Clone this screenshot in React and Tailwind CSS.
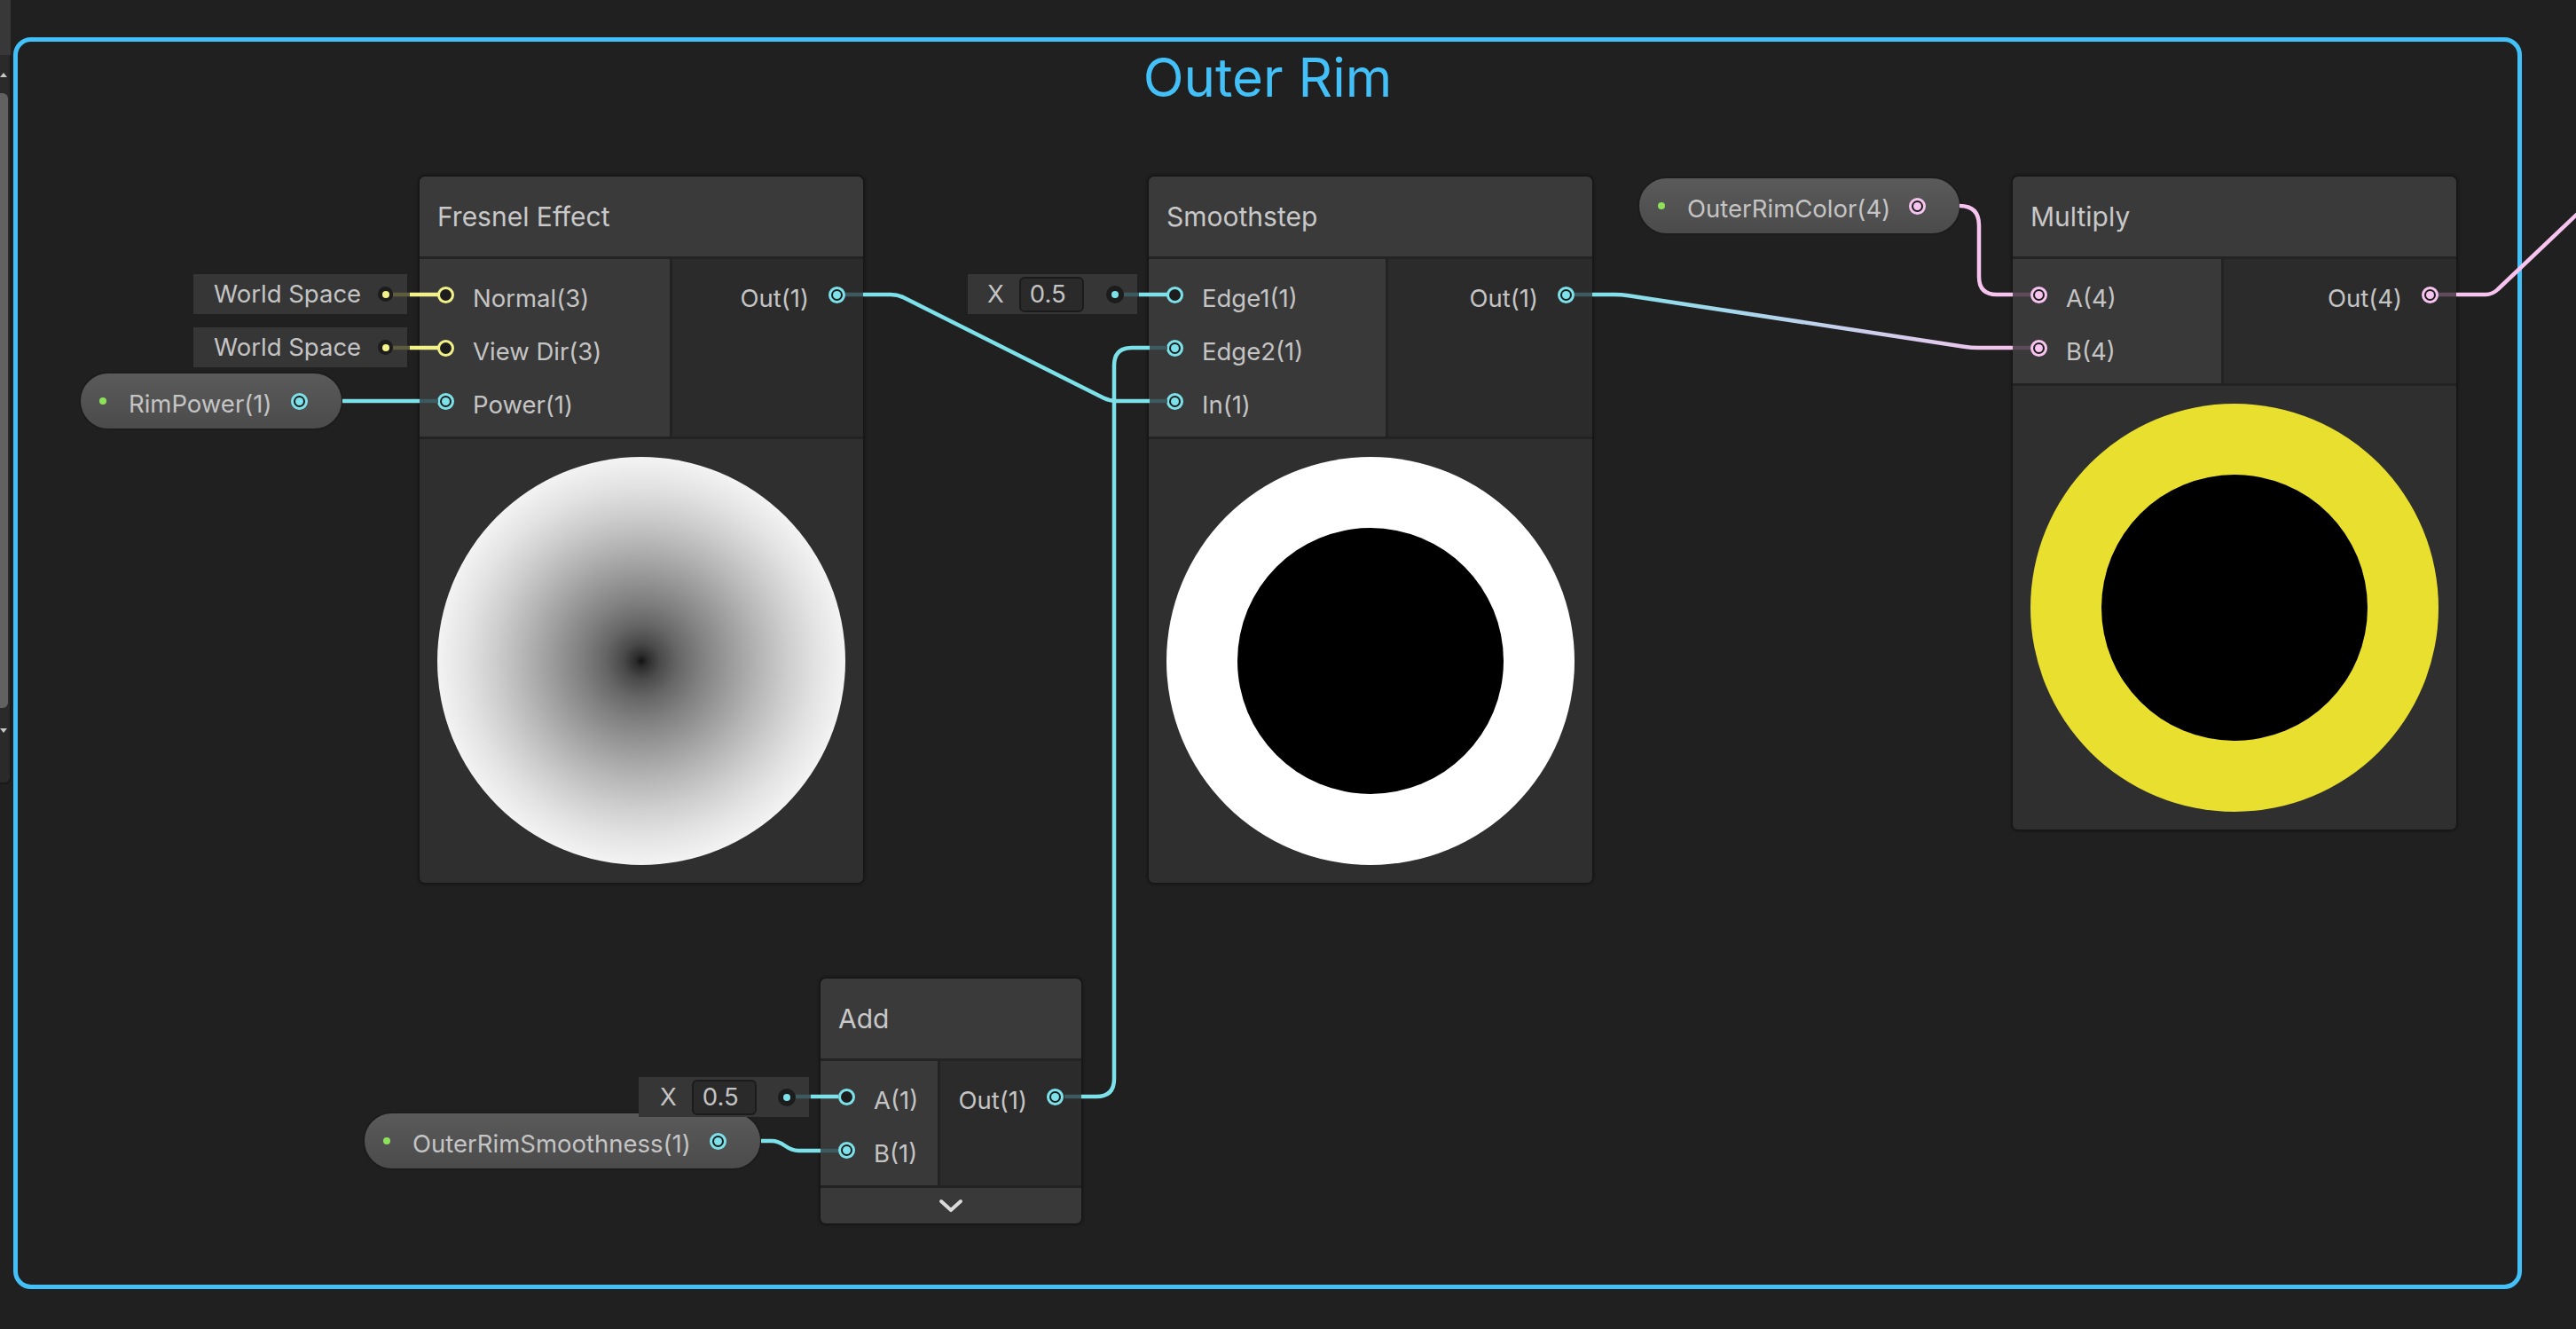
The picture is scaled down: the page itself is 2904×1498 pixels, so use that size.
import React from 'react';

const ringCls = {
  cyan: 'border-[#7de1ea]',
  yellow: 'border-[#f2f18a]',
  pink: 'border-[#f6c4ee]',
};
const dotCls = {
  cyan: 'bg-[#7de1ea]',
  yellow: 'bg-[#f2f18a]',
  pink: 'bg-[#f6c4ee]',
};

const LABEL = 'text-[27.5px] leading-none text-[#c4c4c4] whitespace-nowrap';

function Port({ c, filled }) {
  return (
    <div className={`w-[19px] h-[19px] shrink-0 rounded-full border-[3px] ${ringCls[c]} bg-[#1d1d1d] flex items-center justify-center`}>
      {filled ? <div className={`w-[9px] h-[9px] rounded-full ${dotCls[c]}`} /> : null}
    </div>
  );
}

function InRow({ label, c, filled }) {
  return (
    <div className="h-[60px] flex items-center pl-[20px]">
      <Port c={c} filled={filled} />
      <span className={`ml-[21px] pt-[10px] ${LABEL}`}>{label}</span>
    </div>
  );
}

function OutRow({ label, c }) {
  return (
    <div className="h-[60px] flex items-center justify-end pr-[20px]">
      <span className={`mr-[22px] pt-[10px] ${LABEL}`}>{label}</span>
      <Port c={c} filled />
    </div>
  );
}

function Node({ pos, inW, bodyH, title, inputs, outputs, preview, footer }) {
  return (
    <div className={`absolute ${pos} rounded-[6px] bg-[#232323] shadow-[0_0_3px_2px_rgba(0,0,0,0.35)] flex flex-col overflow-hidden`}>
      <div className="h-[90px] shrink-0 bg-[#3a3a3a] flex items-center pl-[20px]">
        <span className="text-[30px] leading-none text-[#c8c8c8] whitespace-nowrap">{title}</span>
      </div>
      <div className={`mt-[3px] flex gap-[3px] shrink-0 ${bodyH}`}>
        <div className={`${inW} bg-[#393939] py-[10px] flex flex-col`}>
          {inputs.map((p) => (
            <InRow key={p.label} {...p} />
          ))}
        </div>
        <div className="flex-1 bg-[#2b2b2b] py-[10px] flex flex-col">
          {outputs.map((p) => (
            <OutRow key={p.label} {...p} />
          ))}
        </div>
      </div>
      {preview ? (
        <div className="mt-[3px] h-[500px] shrink-0 bg-[#2f2f2f] flex items-center justify-center">{preview}</div>
      ) : null}
      {footer}
    </div>
  );
}

function Pill({ pos, label, c }) {
  return (
    <div className={`absolute ${pos} h-[66px] rounded-full bg-[#535353] bg-linear-to-b from-[#5a5a5a] to-[#4b4b4b] border-2 border-[#1c1c1c] flex items-center pl-[21px] pr-[38px]`}>
      <div className="w-[8px] h-[8px] rounded-full bg-[#8ee05a] shrink-0" />
      <span className={`ml-[25px] pt-[8px] ${LABEL}`}>{label}</span>
      <div className="ml-[21px]">
        <Port c={c} filled />
      </div>
    </div>
  );
}

function InlineDot({ c, size }) {
  return (
    <div className={`ml-auto ${size} rounded-full bg-[#1c1c1c] flex items-center justify-center shrink-0`}>
      <div className={`w-[8px] h-[8px] rounded-full ${dotCls[c]}`} />
    </div>
  );
}

function WorldSpace({ pos }) {
  return (
    <div className={`absolute ${pos} w-[241px] h-[45px] bg-[#363636] flex items-center pl-[23px] pr-[16px]`}>
      <span className={LABEL}>World Space</span>
      <InlineDot c="yellow" size="w-[17px] h-[17px]" />
    </div>
  );
}

function XBox({ pos, pad }) {
  return (
    <div className={`absolute ${pos} h-[45px] bg-[#363636] flex items-center ${pad} pr-[15px]`}>
      <span className={LABEL}>X</span>
      <div className="ml-[17px] w-[73px] h-[40px] rounded-[6px] bg-[#2a2a2a] border-2 border-[#1b1b1b] flex items-center pl-[10px]">
        <span className={LABEL}>0.5</span>
      </div>
      <InlineDot c="cyan" size="w-[20px] h-[20px]" />
    </div>
  );
}

function Wires() {
  const CY = '#7de1ea';
  const CYD = '#3d5b5e';
  const YE = '#f2f18a';
  const YED = '#5d5c3d';
  const PK = '#f6c4ee';
  const PKD = '#5e4c5a';
  const sw = 4.5;
  const P = (d, color, key) => (
    <path key={key} d={d} stroke={color} strokeWidth={sw} fill="none" strokeLinejoin="round" />
  );
  return (
    <svg className="absolute left-0 top-0 pointer-events-none" width="2904" height="1498" viewBox="0 0 2904 1498">
      <defs>
        <linearGradient id="cp" gradientUnits="userSpaceOnUse" x1="1795" y1="0" x2="2269" y2="0">
          <stop offset="0" stopColor={CY} />
          <stop offset="1" stopColor={PK} />
        </linearGradient>
      </defs>
      {P('M443 332 L462 332', YED, 'y1d')}
      {P('M462 332 L494 332', YE, 'y1')}
      {P('M443 392 L462 392', YED, 'y2d')}
      {P('M462 392 L494 392', YE, 'y2')}
      {P('M386 452 L473 452', CY, 'rp')}
      {P('M473 452 L494 452', CYD, 'rpd')}
      {P('M953 332 L973 332', CYD, 'fo1')}
      {P('M973 332 L1004 332 Q1012 332 1019 335.5 L1244 448.5 Q1251 452 1259 452 L1296 452', CY, 'fo')}
      {P('M1296 452 L1316 452', CYD, 'fo2')}
      {P('M1200 1236 L1219 1236', CYD, 'ao1')}
      {P('M1219 1236 L1236 1236 Q1256 1236 1256 1216 L1256 412 Q1256 392 1276 392 L1296 392', CY, 'ao')}
      {P('M1296 392 L1316 392', CYD, 'ao2')}
      {P('M858 1286 L870 1286 C884 1286 886 1297 900 1297 L925 1297', CY, 'sm')}
      {P('M925 1297 L945 1297', CYD, 'smd')}
      {P('M897 1236 L914 1236', CYD, 'xa1')}
      {P('M914 1236 L945 1236', CY, 'xa')}
      {P('M1267 332 L1284 332', CYD, 'xe1')}
      {P('M1284 332 L1316 332', CY, 'xe')}
      {P('M1775 332 L1795 332', CYD, 'so1')}
      {P('M1795 332 L1820 332 Q1828 332 1836 333.2 L2214 390.8 Q2222 392 2230 392 L2269 392', 'url(#cp)', 'so')}
      {P('M2269 392 L2289 392', PKD, 'so2')}
      {P('M2209 232 Q2231 232 2231 254 L2231 312 Q2231 332 2251 332 L2269 332', PK, 'oc')}
      {P('M2269 332 L2289 332', PKD, 'ocd')}
      {P('M2749 332 L2769 332', PKD, 'mo1')}
      {P('M2769 332 L2802 332 Q2810 332 2816 326 L2914 233', PK, 'mo')}
    </svg>
  );
}

export default function App() {
  return (
    <div className="relative w-[2904px] h-[1498px] overflow-hidden bg-[#202020] font-['Inter',sans-serif]">
      <div className="absolute left-0 top-0 w-[12px] h-[62px] bg-[#383838]" />
      <div className="absolute left-0 top-[62px] w-[13px] h-[822px] bg-[#2a2a2a] border-r-2 border-b-2 border-[#1a1a1a] rounded-br-[8px]">
        <div className="absolute left-0 top-[43px] w-[9px] h-[693px] bg-[#616161] rounded-r-[6px]" />
        <svg className="absolute left-0 top-[18px]" width="8" height="8" viewBox="0 0 8 8">
          <path d="M0 7 L4 2 L8 7 Z" fill="#c8c8c8" />
        </svg>
        <svg className="absolute left-0 top-[758px]" width="8" height="8" viewBox="0 0 8 8">
          <path d="M0 1 L4 6 L8 1 Z" fill="#c8c8c8" />
        </svg>
      </div>

      <div className="absolute left-[15px] top-[42px] w-[2828px] h-[1411px] border-[5px] border-[#44c0f8] rounded-[20px] flex justify-center pt-[10px]">
        <div className="text-[60px] leading-[60px] text-[#44c0f8] whitespace-nowrap">Outer Rim</div>
      </div>

      <Node
        pos="left-[473px] top-[199px] w-[500px]"
        inW="w-[282px]"
        bodyH="h-[200px]"
        title="Fresnel Effect"
        inputs={[
          { label: 'Normal(3)', c: 'yellow', filled: false },
          { label: 'View Dir(3)', c: 'yellow', filled: false },
          { label: 'Power(1)', c: 'cyan', filled: true },
        ]}
        outputs={[{ label: 'Out(1)', c: 'cyan' }]}
        preview={
          <div className="w-[460px] h-[460px] rounded-full bg-[radial-gradient(circle_closest-side,#121212_0%,#2c2c2c_3%,#4a4a4a_9%,#666666_18%,#818181_30%,#9c9c9c_44%,#b6b6b6_58%,#cecece_72%,#e3e3e3_86%,#f3f3f3_100%)]" />
        }
      />

      <Node
        pos="left-[1295px] top-[199px] w-[500px]"
        inW="w-[267px]"
        bodyH="h-[200px]"
        title="Smoothstep"
        inputs={[
          { label: 'Edge1(1)', c: 'cyan', filled: false },
          { label: 'Edge2(1)', c: 'cyan', filled: true },
          { label: 'In(1)', c: 'cyan', filled: true },
        ]}
        outputs={[{ label: 'Out(1)', c: 'cyan' }]}
        preview={
          <div className="w-[460px] h-[460px] rounded-full bg-white flex items-center justify-center">
            <div className="w-[300px] h-[300px] rounded-full bg-black" />
          </div>
        }
      />

      <Node
        pos="left-[2269px] top-[199px] w-[500px]"
        inW="w-[235px]"
        bodyH="h-[140px]"
        title="Multiply"
        inputs={[
          { label: 'A(4)', c: 'pink', filled: true },
          { label: 'B(4)', c: 'pink', filled: true },
        ]}
        outputs={[{ label: 'Out(4)', c: 'pink' }]}
        preview={
          <div className="w-[460px] h-[460px] rounded-full bg-[#e9df2e] flex items-center justify-center">
            <div className="w-[300px] h-[300px] rounded-full bg-black" />
          </div>
        }
      />

      <Node
        pos="left-[925px] top-[1103px] w-[294px]"
        inW="w-[132px]"
        bodyH="h-[140px]"
        title="Add"
        inputs={[
          { label: 'A(1)', c: 'cyan', filled: false },
          { label: 'B(1)', c: 'cyan', filled: true },
        ]}
        outputs={[{ label: 'Out(1)', c: 'cyan' }]}
        footer={
          <div className="mt-[3px] h-[40px] shrink-0 bg-[#393939] flex items-center justify-center">
            <svg width="30" height="18" viewBox="0 0 30 18">
              <polyline points="4,4 15,14 26,4" fill="none" stroke="#dadada" strokeWidth="4" strokeLinejoin="round" strokeLinecap="round" />
            </svg>
          </div>
        }
      />

      <Pill pos="left-[89px] top-[419px]" label="RimPower(1)" c="cyan" />
      <Pill pos="left-[1846px] top-[199px]" label="OuterRimColor(4)" c="pink" />
      <Pill pos="left-[409px] top-[1253px]" label="OuterRimSmoothness(1)" c="cyan" />

      <WorldSpace pos="left-[218px] top-[309px]" />
      <WorldSpace pos="left-[218px] top-[369px]" />
      <XBox pos="left-[1091px] top-[309px] w-[191px]" pad="pl-[22px]" />
      <XBox pos="left-[720px] top-[1214px] w-[192px]" pad="pl-[24px]" />

      <Wires />
    </div>
  );
}
